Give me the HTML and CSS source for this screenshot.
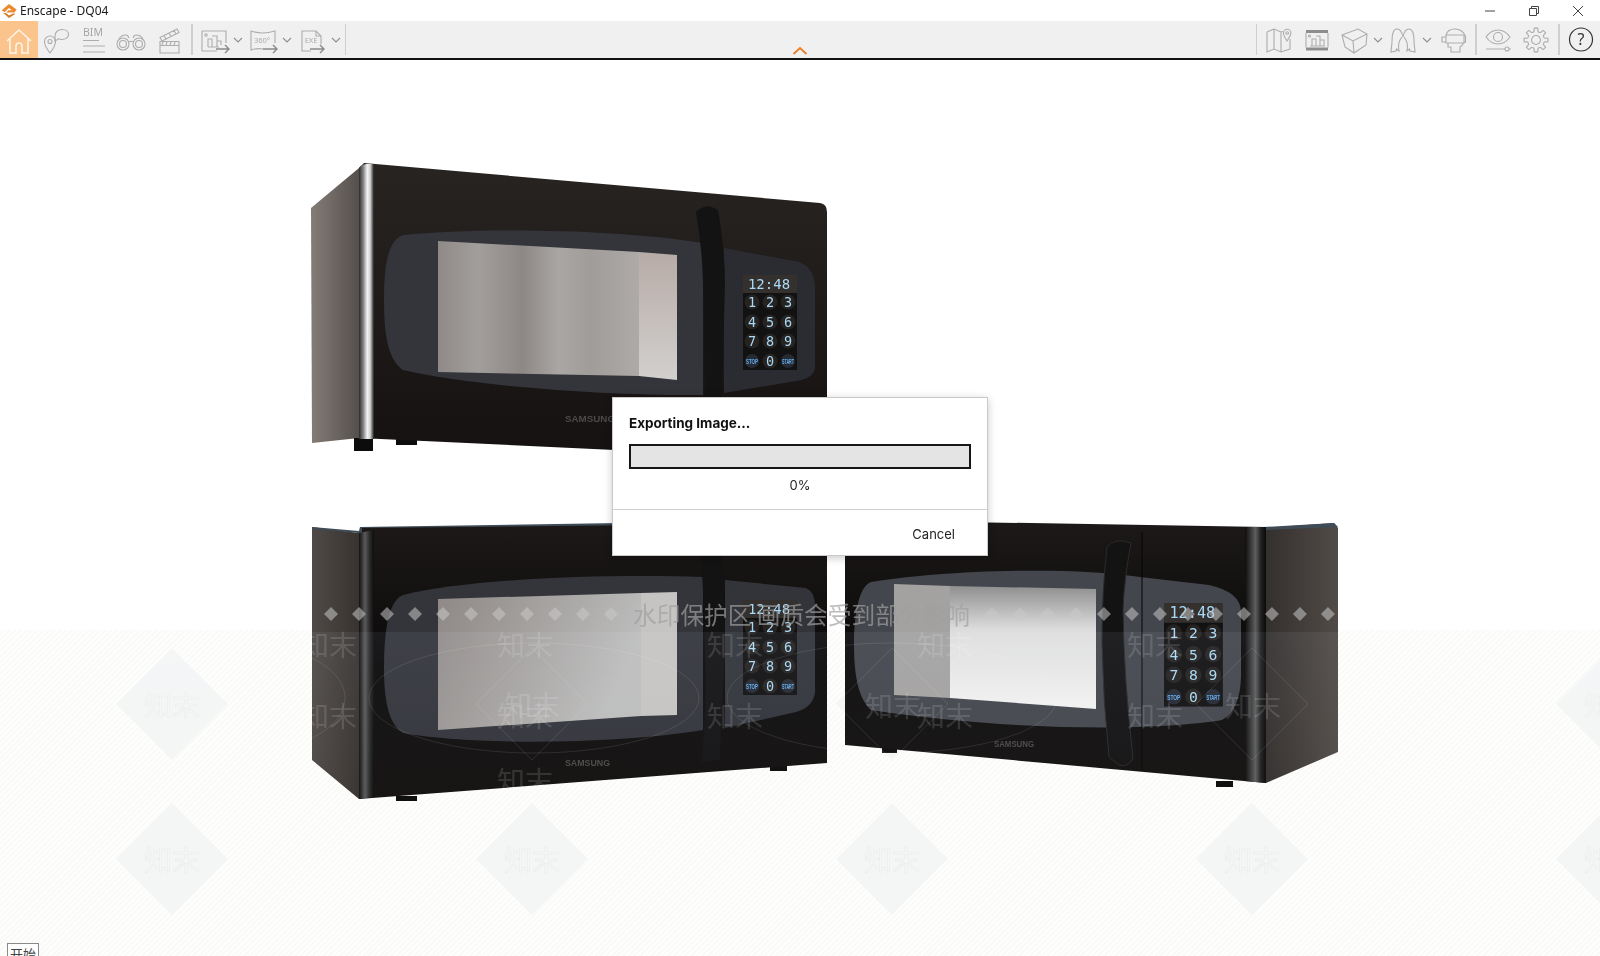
FILE: index.html
```html
<!DOCTYPE html>
<html lang="en">
<head>
  <meta charset="UTF-8">
  <title>Enscape - DQ04</title>
  <link rel="stylesheet" href="styles.css">
</head>
<body>
  <div class="app">
    <!-- title bar -->
    <div class="titlebar">
      <svg class="logo" width="16" height="16" viewBox="0 0 16 16">
        <path class="logo-top" d="M0.500 7.500 L8 1 L15.500 6.500 L13.500 9.500 H5.500 L7.500 7.200 H11 L8 5 L3.800 9 Z"/>
        <path class="logo-bottom" d="M2 9.800 L8 15 L14.500 10.800 L12 10.500 L8 12.600 L5.300 10.300 Z"/>
      </svg>
      <span class="title-text">Enscape - DQ04</span>
      <div class="win-btns">
        <div class="win-btn"><svg width="12" height="12" viewBox="0 0 12 12"><path d="M1 6 H11"/></svg></div>
        <div class="win-btn"><svg width="12" height="12" viewBox="0 0 12 12"><path d="M1.500 3.500 H8.500 V10.500 H1.500 Z M3.500 3.500 V1.500 H10.500 V8.500 H8.500"/></svg></div>
        <div class="win-btn"><svg width="12" height="12" viewBox="0 0 12 12"><path d="M1 1 L11 11 M11 1 L1 11"/></svg></div>
      </div>
    </div>

    <!-- toolbar -->
    <div class="toolbar">
      <div class="tool tool-home">
        <svg width="34" height="34" viewBox="0 0 34 34"><path d="M5 18 L17 7 L29 18 M8 16 V30 H14 V23 a3 3 0 0 1 6 0 V30 H26 V16"/></svg>
      </div>
      <div class="tool">
        <svg width="34" height="34" viewBox="0 0 34 34"><path d="M11 30 C7 25 5.500 22 5.500 18.500 a5.500 5.500 0 0 1 11 0 C16.500 22 15 25 11 30 Z"/><circle cx="11" cy="18.500" r="2"/><path d="M16 13 C16 9 19 6.500 23 6.500 C27 6.500 29.500 8.800 29.500 11.500 C29.500 14.500 26.500 16.500 23 16.500 C21.500 16.500 20.500 16.300 19.500 15.800 L16 18 Z"/></svg>
      </div>
      <div class="tool">
        <svg width="34" height="34" viewBox="0 0 34 34"><text class="ico-text" x="6" y="12.500">BIM</text><path d="M6 17.500 H22 M6 23 H28 M6 29 H28"/></svg>
      </div>
      <div class="tool">
        <svg width="34" height="34" viewBox="0 0 34 34"><circle cx="9" cy="21" r="6"/><circle cx="9" cy="21" r="3.500"/><circle cx="25" cy="21" r="6"/><circle cx="25" cy="21" r="3.500"/><path d="M15 19 Q17 17.500 19 19 M5 16 Q7 12 12 12 Q14 12 15 15 M29 16 Q27 12 22 12 Q20 12 19 15"/></svg>
      </div>
      <div class="tool">
        <svg width="34" height="34" viewBox="0 0 34 34"><path d="M8 18.500 H27 V30 H8 Z M8 22.500 H27 M11 19 L10 22 M15 19 L14 22 M19 19 L18 22 M23 19 L22 22 M8 14.500 L25 6 L27 9.500 L10 18 Z M12 12.500 L14 16 M17 10 L19 13.500 M22 7.500 L24 11"/></svg>
      </div>
      <div class="sep"></div>
      <div class="tool-drop">
        <svg width="32" height="34" viewBox="0 0 32 34"><path d="M19 28 H4 V8 H28 V20"/><circle cx="8" cy="12" r="1.200"/><path d="M10 24 V16 H14 V24 M14 13 H19 V24 M19 18 H23 V22 M10 24 H21"/><path class="arrow" d="M18 26 H31 M27 22 L31 26 L27 30"/></svg>
      </div>
      <div class="chev"><svg width="10" height="6" viewBox="0 0 10 6"><path d="M1 1 L5 5 L9 1"/></svg></div>
      <div class="tool-drop">
        <svg width="32" height="34" viewBox="0 0 32 34"><path d="M16 26 Q9 25 4 27 V8 Q15 12 28 8 V20"/><text class="ico-text-sm" x="15" y="20" text-anchor="middle">360°</text><path class="arrow" d="M16 26 H30 M26 22 L30 26 L26 30"/></svg>
      </div>
      <div class="chev"><svg width="10" height="6" viewBox="0 0 10 6"><path d="M1 1 L5 5 L9 1"/></svg></div>
      <div class="tool-drop">
        <svg width="32" height="34" viewBox="0 0 32 34"><path d="M15 28 H6 V8 H20 L25 13 V21 M20 8 V13 H25"/><text class="ico-text-sm" x="15" y="20" text-anchor="middle">EXE</text><path class="arrow" d="M14 26 H28 M24 22 L28 26 L24 30"/></svg>
      </div>
      <div class="chev"><svg width="10" height="6" viewBox="0 0 10 6"><path d="M1 1 L5 5 L9 1"/></svg></div>
      <div class="sep sep-end"></div>

      <div class="toolbar-right">
        <div class="sep sep-end"></div>
        <div class="tool">
          <svg width="34" height="34" viewBox="0 0 34 34"><path d="M5 9 L12 6 L19 9 L21 8.500 M5 9 V29 L12 26 L19 29 L28 26 V16 M12 6 V26 M19 9 V29"/><path d="M25 18 C22.500 14 21.500 12.500 21.500 10 a3.700 3.700 0 0 1 7.400 0 C28.900 12.500 27.500 14 25 18 Z"/><circle cx="25.200" cy="10" r="1.300"/></svg>
        </div>
        <div class="tool">
          <svg width="34" height="34" viewBox="0 0 34 34"><rect class="solid" x="6" y="7" width="22" height="3"/><rect class="solid" x="6" y="24.500" width="22" height="3"/><path d="M6 10 V24.500 M28 10 V24.500 M12 23 V16 H16 V23 M16 13 H20 V23 M20 17 H24 V23 M10 23 H25"/><circle cx="9.500" cy="13" r="1"/></svg>
        </div>
        <div class="tool-drop tool-cube">
          <svg width="32" height="34" viewBox="0 0 32 34"><path d="M4 12 L20 6 L29 11 L28 22 L16 30 L7 24 Z M4 12 L15 18 L29 11 M15 18 L16 30"/></svg>
        </div>
        <div class="chev"><svg width="10" height="6" viewBox="0 0 10 6"><path d="M1 1 L5 5 L9 1"/></svg></div>
        <div class="tool-drop">
          <svg width="32" height="34" viewBox="0 0 32 34"><path d="M16 14 C15 9 13 6 10 6 C6 6 5 12 5 18 C5 23 4 26 4 29 L9 28 L9.500 26 L12 28 C11 23 12 19 13 17 L15 14 M16 14 C17 9 19 6 22 6 C26 6 27 12 27 18 C27 23 28 26 28 29 L23 28 L22.500 26 L20 28 C21 23 20 19 19 17 L17 14"/></svg>
        </div>
        <div class="chev"><svg width="10" height="6" viewBox="0 0 10 6"><path d="M1 1 L5 5 L9 1"/></svg></div>
        <div class="tool tool-vr">
          <svg width="34" height="34" viewBox="0 0 34 34"><path d="M10 12 C11 8 15 6 19 6 C24 6 28 9 29 13 M10 12 H28 V20 H10 Z M10 14 H6 V19 H10 M28 12 L29.500 13 V19 L28 20 M12 20 V24 H15 V29 H24 V24 C26 23 27 22 27 20"/></svg>
        </div>
        <div class="sep sep-wide"></div>
        <div class="tool">
          <svg width="34" height="34" viewBox="0 0 34 34"><path d="M5 14 C9 8.500 13 7 17 7 C21 7 25 8.500 29 14 C25 19.500 21 21 17 21 C13 21 9 19.500 5 14 Z"/><circle cx="17" cy="14" r="4.500"/><path d="M5 26 H24 M28 26 H30"/><circle cx="26" cy="26" r="2"/></svg>
        </div>
        <div class="tool">
          <svg width="34" height="34" viewBox="0 0 34 34"><g transform="translate(17,17)"><polygon points="8.250,-2.060 11.880,-1.670 11.880,1.670 8.250,2.060 7.290,4.380 9.580,7.220 7.220,9.580 4.380,7.290 2.060,8.250 1.670,11.880 -1.670,11.880 -2.060,8.250 -4.380,7.290 -7.220,9.580 -9.580,7.220 -7.290,4.380 -8.250,2.060 -11.880,1.670 -11.880,-1.670 -8.250,-2.060 -7.290,-4.380 -9.580,-7.220 -7.220,-9.580 -4.380,-7.290 -2.060,-8.250 -1.670,-11.880 1.670,-11.880 2.060,-8.250 4.380,-7.290 7.220,-9.580 9.580,-7.220 7.290,-4.380"/><circle r="4.500"/></g></svg>
        </div>
        <div class="sep sep-last"></div>
        <div class="tool tool-help">
          <svg width="34" height="34" viewBox="0 0 34 34"><circle cx="17" cy="16.500" r="11.500"/><text class="help-mark" x="17" y="22" text-anchor="middle">?</text></svg>
        </div>
      </div>

      <svg class="collapse" width="16" height="9" viewBox="0 0 16 9"><path d="M1.500 8 L8 2 L14.500 8"/></svg>
    </div>

    <!-- render area -->
    <div class="viewport">
      <div class="band"></div>

      <svg class="scene" width="1600" height="896" viewBox="0 60 1600 896">
        <defs>
          <linearGradient id="front-a" x1="0" y1="0" x2="0" y2="1"><stop offset="0" stop-color="#282422"/><stop offset="1" stop-color="#151110"/></linearGradient>
          <linearGradient id="front-b" x1="0" y1="0" x2="0" y2="1"><stop offset="0" stop-color="#1c1918"/><stop offset="0.500" stop-color="#0c0a0a"/><stop offset="1" stop-color="#141110"/></linearGradient>
          <linearGradient id="side-a" x1="0" y1="0" x2="1" y2="0"><stop offset="0" stop-color="#847c76"/><stop offset="1" stop-color="#55504d"/></linearGradient>
          <linearGradient id="side-b" x1="0" y1="0" x2="1" y2="0"><stop offset="0" stop-color="#4f4a47"/><stop offset="1" stop-color="#38332f"/></linearGradient>
          <linearGradient id="side-c" x1="0" y1="0" x2="1" y2="0"><stop offset="0" stop-color="#332f2d"/><stop offset="1" stop-color="#514b47"/></linearGradient>
          <linearGradient id="strip-a" x1="0" y1="0" x2="1" y2="0"><stop offset="0" stop-color="#2a2a2a"/><stop offset="0.300" stop-color="#8a8a8a"/><stop offset="0.550" stop-color="#f4f4f4"/><stop offset="0.750" stop-color="#d0d0d0"/><stop offset="1" stop-color="#1c1a19"/></linearGradient>
          <linearGradient id="strip-b" x1="0" y1="0" x2="1" y2="0"><stop offset="0" stop-color="#111"/><stop offset="0.400" stop-color="#5a5a5a"/><stop offset="0.700" stop-color="#2c2c2c"/><stop offset="1" stop-color="#0e0d0d"/></linearGradient>
          <linearGradient id="strip-c" x1="0" y1="0" x2="1" y2="0"><stop offset="0" stop-color="#0e0d0d"/><stop offset="0.500" stop-color="#5e5e5e"/><stop offset="0.750" stop-color="#222"/><stop offset="1" stop-color="#0b0a0a"/></linearGradient>
          <linearGradient id="glass-a" x1="0" y1="0" x2="1" y2="0"><stop offset="0" stop-color="#8f8a87"/><stop offset="0.200" stop-color="#a29e9b"/><stop offset="0.420" stop-color="#8d8886"/><stop offset="0.600" stop-color="#a9a6a3"/><stop offset="0.760" stop-color="#a09c9a"/><stop offset="1" stop-color="#aeaaa8"/></linearGradient>
          <linearGradient id="glass-a2" x1="0" y1="0" x2="0" y2="1"><stop offset="0" stop-color="#b7aba6"/><stop offset="1" stop-color="#d2d0ce"/></linearGradient>
          <linearGradient id="glass-b" x1="0" y1="0" x2="1" y2="0.300"><stop offset="0" stop-color="#8e8886"/><stop offset="0.500" stop-color="#a5a2a0"/><stop offset="1" stop-color="#bdbdbd"/></linearGradient>
          <linearGradient id="glass-c" x1="0" y1="0" x2="0" y2="1"><stop offset="0" stop-color="#8f8f8f"/><stop offset="0.350" stop-color="#dcdcdc"/><stop offset="1" stop-color="#f1f1f1"/></linearGradient>
          <g id="keypad">
            <rect class="kp-display" width="54" height="18"/>
            <rect class="kp-body" y="18" width="54" height="77"/>
            <text class="kp-time" x="26" y="14" text-anchor="middle">12:48</text>
            <circle class="kp-key" cx="9" cy="27" r="7.500"/><circle class="kp-key" cx="27" cy="27" r="7.500"/><circle class="kp-key" cx="45" cy="27" r="7.500"/>
            <circle class="kp-key" cx="9" cy="47" r="7.500"/><circle class="kp-key" cx="27" cy="47" r="7.500"/><circle class="kp-key" cx="45" cy="47" r="7.500"/>
            <circle class="kp-key" cx="9" cy="66" r="7.500"/><circle class="kp-key" cx="27" cy="66" r="7.500"/><circle class="kp-key" cx="45" cy="66" r="7.500"/>
            <circle class="kp-stop" cx="9" cy="86" r="7"/><circle class="kp-key" cx="27" cy="86" r="7.500"/><circle class="kp-stop" cx="45" cy="86" r="7"/>
            <text class="kp-num" x="9" y="32" text-anchor="middle">1</text><text class="kp-num" x="27" y="32" text-anchor="middle">2</text><text class="kp-num" x="45" y="32" text-anchor="middle">3</text>
            <text class="kp-num" x="9" y="52" text-anchor="middle">4</text><text class="kp-num" x="27" y="52" text-anchor="middle">5</text><text class="kp-num" x="45" y="52" text-anchor="middle">6</text>
            <text class="kp-num" x="9" y="71" text-anchor="middle">7</text><text class="kp-num" x="27" y="71" text-anchor="middle">8</text><text class="kp-num" x="45" y="71" text-anchor="middle">9</text>
            <text class="kp-small" x="9" y="89" text-anchor="middle" textLength="12" lengthAdjust="spacingAndGlyphs">STOP</text>
            <text class="kp-num" x="27" y="91" text-anchor="middle">0</text>
            <text class="kp-small" x="45" y="89" text-anchor="middle" textLength="12" lengthAdjust="spacingAndGlyphs">START</text>
          </g>
        </defs>

        <!-- watermark diamonds, behind the product -->
        <g class="wm-diamonds">
          <polygon points="172,648 228,704 172,760 116,704"/>
          <polygon points="532,648 588,704 532,760 476,704"/>
          <polygon points="892,648 948,704 892,760 836,704"/>
          <polygon points="1252,648 1308,704 1252,760 1196,704"/>
          <polygon points="1612,648 1668,704 1612,760 1556,704"/>
          <polygon points="172,803 228,859 172,915 116,859"/>
          <polygon points="532,803 588,859 532,915 476,859"/>
          <polygon points="892,803 948,859 892,915 836,859"/>
          <polygon points="1252,803 1308,859 1252,915 1196,859"/>
          <polygon points="1612,803 1668,859 1612,915 1556,859"/>
        </g>
        <g class="wm-name">
          <text x="172" y="716" text-anchor="middle">知末</text>
          <text x="172" y="871" text-anchor="middle">知末</text>
          <text x="532" y="871" text-anchor="middle">知末</text>
          <text x="892" y="871" text-anchor="middle">知末</text>
          <text x="1252" y="871" text-anchor="middle">知末</text>
          <text x="1612" y="871" text-anchor="middle">知末</text>
          <text x="1612" y="716" text-anchor="middle">知末</text>
        </g>

        <!-- top microwave -->
        <polygon fill="url(#side-a)" points="311,208 359,168 359,438 312,443"/>
        <rect class="foot" x="354" y="438" width="19" height="13"/>
        <rect class="foot" x="396" y="438" width="21" height="7"/>
        <path fill="url(#front-a)" d="M364 163 L820 203 Q827 204 827 212 V460 L359 438 V168 Z"/>
        <path fill="url(#strip-a)" d="M359 168 Q362 163 374 164 V439 H359 Z"/>
        <path class="door" d="M384 300 C384 265 388 240 403 235 C470 228 610 228 703 243 V395 C610 396 470 386 403 370 C388 360 384 335 384 300 Z"/>
        <polygon fill="url(#glass-a)" points="438,241 639,252 639,376 438,372"/>
        <polygon fill="url(#glass-a2)" points="639,252 677,255 677,380 639,376"/>
        <path class="door-dark" d="M724 248 L799 262 Q815 268 815 288 V367 Q815 378 796 381 L724 393 Z"/>
        <path class="handle" d="M696 212 Q706 202 718 210 Q725 250 725 283 L722 397 H705 L703 283 Q702 245 696 212 Z"/>
        <use href="#keypad" x="743" y="275"/>
        <text class="brand" x="565" y="422" textLength="50" lengthAdjust="spacingAndGlyphs">SAMSUNG</text>

        <!-- bottom left microwave -->
        <polygon fill="url(#side-b)" points="312,527 359,533 359,799 312,760"/>
        <path class="edge" d="M312 527 L359 531 L360 527 L620 523 L625 526 L362 533 L359 533 L312 529 Z"/>
        <rect class="foot" x="396" y="796" width="21" height="5"/>
        <rect class="foot" x="770" y="765" width="17" height="6"/>
        <polygon fill="url(#front-b)" points="362,528 827,523 827,763 359,799"/>
        <polygon fill="url(#strip-b)" points="359,533 374,530 374,797 359,799"/>
        <path class="door" d="M384 668 C384 625 390 600 403 595 C470 578 610 574 703 577 V730 C610 745 470 745 403 733 C390 725 384 705 384 668 Z"/>
        <polygon fill="url(#glass-b)" points="438,599 641,593 641,716 438,730"/>
        <polygon class="glass-light" points="641,593 677,592 677,715 641,716"/>
        <path class="door-mid" d="M725 580 L806 588 Q815 592 815 606 V693 Q812 708 796 712 L725 728 Z"/>
        <path class="handle" d="M701 556 H722 Q725 600 725 653 L720 760 L701 763 Q707 710 705 653 Q704 600 701 556 Z"/>
        <use href="#keypad" x="743" y="600"/>
        <text class="brand" x="565" y="766" textLength="45" lengthAdjust="spacingAndGlyphs">SAMSUNG</text>

        <!-- bottom right microwave -->
        <polygon fill="url(#side-c)" points="1264,528 1334,523 1338,528 1338,752 1266,783"/>
        <path class="edge" d="M1264 527 L1334 523 L1338 527 L1266 530 Z"/>
        <rect class="foot" x="882" y="748" width="15" height="5"/>
        <rect class="foot" x="1216" y="781" width="17" height="6"/>
        <polygon fill="url(#front-b)" points="845,520 1266,527 1266,783 845,745"/>
        <polygon fill="url(#strip-c)" points="1245,527 1266,527 1266,783 1245,781"/>
        <path class="door-light" d="M854 645 C854 610 860 586 871 582 C930 572 1060 565 1140 577 L1209 585 Q1241 592 1241 612 V677 Q1240 710 1222 720 C1150 732 1000 730 871 710 C860 700 854 680 854 645 Z"/>
        <polygon class="glass-left" points="894,584 950,586 950,698 894,695"/>
        <polygon fill="url(#glass-c)" points="950,586 1096,589 1096,709 950,698"/>
        <line class="seam" x1="1142" y1="532" x2="1142" y2="770"/>
        <path class="handle handle-rim" d="M1107 547 Q1115 537 1131 543 Q1124 580 1123 610 Q1124 680 1133 758 Q1128 768 1119 765 L1109 757 Q1103 700 1102 643 Q1102 590 1107 547 Z"/>
        <use href="#keypad" transform="translate(1164 603) scale(1.09)"/>
        <text class="brand" x="994" y="747" textLength="40" lengthAdjust="spacingAndGlyphs">SAMSUNG</text>
      </svg>

      <!-- watermark over the product -->
      <div class="veil"></div>
      <svg class="scene" width="1600" height="896" viewBox="0 60 1600 896">
        <g class="wm-lines">
          <ellipse cx="534" cy="698" rx="165" ry="55"/>
          <ellipse cx="240" cy="698" rx="105" ry="55"/>
          <ellipse cx="892" cy="698" rx="165" ry="55"/>
          <polygon points="532,648 588,704 532,760 476,704"/>
          <polygon points="892,648 948,704 892,760 836,704"/>
          <polygon points="1252,648 1308,704 1252,760 1196,704"/>
        </g>
        <g class="wm-soft">
          <text x="329" y="656" text-anchor="middle">知末</text>
          <text x="525" y="656" text-anchor="middle">知末</text>
          <text x="735" y="656" text-anchor="middle">知末</text>
          <text x="945" y="656" text-anchor="middle">知末</text>
          <text x="1155" y="656" text-anchor="middle">知末</text>
          <text x="329" y="727" text-anchor="middle">知末</text>
          <text x="525" y="727" text-anchor="middle">知末</text>
          <text x="532" y="716" text-anchor="middle">知末</text>
          <text x="735" y="727" text-anchor="middle">知末</text>
          <text x="893" y="717" text-anchor="middle">知末</text>
          <text x="945" y="727" text-anchor="middle">知末</text>
          <text x="1155" y="727" text-anchor="middle">知末</text>
          <text x="1253" y="717" text-anchor="middle">知末</text>
          <text x="525" y="792" text-anchor="middle">知末</text>
        </g>
      </svg>

      <div class="notice">
        <div class="notice-dots"><i></i><i></i><i></i><i></i><i></i><i></i><i></i><i></i><i></i><i></i><i></i></div>
        <span class="notice-text">水印保护区 画质会受到部分影响</span>
        <div class="notice-dots"><i></i><i></i><i></i><i></i><i></i><i></i><i></i><i></i><i></i><i></i><i></i><i></i><i></i></div>
      </div>

      <!-- export dialog -->
      <div class="dialog">
        <div class="dialog-body">
          <div class="dialog-title">Exporting Image...</div>
          <div class="progress-bar"></div>
          <div class="progress-text">0%</div>
        </div>
        <div class="dialog-footer">
          <button class="btn-cancel">Cancel</button>
        </div>
      </div>

      <div class="start-tag">开始</div>
    </div>
  </div>
</body>
</html>
```

FILE: styles.css
```css
* {
  box-sizing: border-box;
}
html, body {
  margin: 0;
  padding: 0;
  height: 100%;
  overflow: hidden;
}
body {
  background-color: #fff;
  font-family: "Noto Sans", "Noto Sans CJK SC", sans-serif;
  color: #222;
}
.app {
  display: flex;
  flex-direction: column;
  height: 956px;
}

/* title bar */
.titlebar {
  display: flex;
  align-items: center;
  height: 21px;
  flex-shrink: 0;
  padding-left: 1px;
}
.logo {
  margin-right: 3px;
}
.logo-top {
  fill: #e98a2e;
}
.logo-bottom {
  fill: #d67a22;
}
.title-text {
  font-size: 12px;
  color: #1a1a1a;
}
.win-btns {
  display: flex;
  margin-left: auto;
}
.win-btn {
  display: flex;
  align-items: center;
  justify-content: center;
  width: 44px;
  height: 21px;
}
.win-btn path {
  fill: none;
  stroke: #444;
  stroke-width: 1;
}

/* toolbar */
.toolbar {
  position: relative;
  display: flex;
  align-items: center;
  height: 39px;
  flex-shrink: 0;
  background-color: #f0f0f0;
  border-bottom: 2px solid #111;
}
.tool,
.tool-drop,
.chev {
  display: flex;
  align-items: center;
  justify-content: center;
  height: 37px;
  flex-shrink: 0;
}
.tool {
  width: 37.5px;
}
.tool-drop {
  width: 32px;
}
.tool-cube {
  margin-left: 2px;
}
.tool-vr {
  width: 34px;
  margin-right: 3px;
}
.chev {
  width: 17px;
}
.tool svg path,
.tool svg circle,
.tool svg polygon,
.tool-drop svg path,
.tool-drop svg circle {
  fill: none;
  stroke: #adadad;
  stroke-width: 1.1;
}
.tool svg rect.solid {
  fill: #8d8d8d;
}
.tool-drop svg path.arrow {
  stroke: #8a8a8a;
  stroke-width: 1.4;
}
.chev path {
  fill: none;
  stroke: #8f8f8f;
  stroke-width: 1.1;
}
.tool-home {
  background-color: #fbc48c;
}
.tool-home svg path {
  stroke: #fff3e4;
  stroke-width: 1.6;
}
.ico-text {
  font-family: "Noto Sans", sans-serif;
  font-size: 10.5px;
  fill: #a6a6a6;
}
.ico-text-sm {
  font-family: "Noto Sans", sans-serif;
  font-size: 7.5px;
  fill: #adadad;
}
.sep {
  width: 2px;
  height: 31px;
  flex-shrink: 0;
  margin: 0 5px 0 3px;
  background-color: #cfcfcf;
}
.sep-end {
  width: 1px;
  margin: 0;
}
.toolbar-right {
  display: flex;
  align-items: center;
  margin-left: auto;
}
.toolbar-right > .sep-end {
  margin-right: 4px;
}
.toolbar-right > .sep-wide {
  margin-left: 2px;
  margin-right: 3px;
}
.toolbar-right > .sep-last {
  margin-left: 3px;
  margin-right: 3px;
}
.tool-help svg circle {
  stroke: #333;
  stroke-width: 1.2;
}
.help-mark {
  font-family: "Noto Sans", sans-serif;
  font-size: 16px;
  fill: #333;
}
.collapse {
  position: absolute;
  left: 792px;
  top: 25px;
}
.collapse path {
  fill: none;
  stroke: #e8832a;
  stroke-width: 2;
}

/* render area */
.viewport {
  position: relative;
  flex: 1;
  overflow: hidden;
  background-color: #fff;
}
.band {
  position: absolute;
  left: 0;
  right: 0;
  top: 570px;
  bottom: 0;
  background-color: #fcfcfb;
  background-image: repeating-linear-gradient(135deg, #fefefd 0, #fefefd 2px, #fafaf9 2px, #fafaf9 4px);
}
.scene {
  position: absolute;
  left: 0;
  top: 0;
}
.veil {
  position: absolute;
  left: 0;
  right: 0;
  top: 572px;
  height: 190px;
  background: linear-gradient(rgba(110, 120, 135, 0.12), rgba(110, 120, 135, 0.02));
  mix-blend-mode: screen;
}

/* microwave parts */
.foot {
  fill: #0d0c0c;
}
.door {
  fill: #34353b;
}
.door-dark {
  fill: #2b2c31;
}
.door-mid {
  fill: #32343a;
}
.door-light {
  fill: #44464d;
}
.handle {
  fill: #141314;
}
.handle-rim {
  stroke: #2a2a2a;
  stroke-width: 1;
}
.edge {
  fill: #3f4c57;
}
.seam {
  stroke: #050505;
  stroke-width: 1;
}
.glass-light {
  fill: #c6c4c2;
}
.glass-left {
  fill: #a3a2a1;
}
.brand {
  font-family: "Liberation Sans", sans-serif;
  font-size: 9px;
  font-weight: bold;
  fill: #4c4a48;
}
.kp-display {
  fill: #33302e;
}
.kp-body {
  fill: #131212;
}
.kp-key {
  fill: #262321;
}
.kp-stop {
  fill: #262a33;
}
.kp-time {
  font-family: "DejaVu Sans Mono", monospace;
  font-size: 14px;
  fill: #a9d8f5;
}
.kp-num {
  font-family: "DejaVu Sans Mono", monospace;
  font-size: 13.5px;
  fill: #a9d8f5;
}
.kp-small {
  font-family: "Liberation Sans", sans-serif;
  font-size: 7px;
  font-weight: bold;
  fill: #62aef0;
}

/* watermark */
.wm-diamonds polygon {
  fill: #f4f5f5;
}
.wm-name text {
  font-family: "Noto Sans CJK SC", sans-serif;
  font-size: 28px;
  fill: #f6f6f6;
  stroke: #e8e9e9;
  stroke-width: 0.5;
}
.wm-lines ellipse,
.wm-lines polygon {
  fill: none;
  stroke: rgba(255, 255, 255, 0.1);
  stroke-width: 1;
}
.wm-soft text {
  font-family: "Noto Sans CJK SC", sans-serif;
  font-size: 28px;
  fill: rgba(255, 255, 255, 0.13);
}
.notice {
  position: absolute;
  left: 324px;
  top: 538px;
  display: flex;
  align-items: center;
  height: 32px;
}
.notice-dots {
  display: flex;
  gap: 14px;
}
.notice-dots i {
  display: block;
  width: 14px;
  height: 14px;
  clip-path: polygon(50% 0, 100% 50%, 50% 100%, 0 50%);
  background-color: rgba(200, 200, 200, 0.55);
}
.notice-text {
  margin: 0 15px;
  font-family: "Noto Sans CJK SC", sans-serif;
  font-size: 23.700px;
  color: rgba(160, 160, 160, 0.7);
  white-space: nowrap;
}

/* export dialog */
.dialog {
  position: absolute;
  left: 612px;
  top: 337px;
  width: 376px;
  height: 159px;
  display: flex;
  flex-direction: column;
  background-color: #fff;
  border: 1px solid #c9c9c9;
  box-shadow: 0 2px 8px rgba(0, 0, 0, 0.22);
  font-family: Inter, sans-serif;
}
.dialog-body {
  height: 112px;
  padding: 16px 16px 0;
  border-bottom: 1px solid #cfcfcf;
}
.dialog-title {
  font-size: 13.500px;
  font-weight: 700;
  line-height: 18px;
  color: #111;
}
.progress-bar {
  height: 25px;
  margin-top: 12px;
  background-color: #e4e4e4;
  border: 2px solid #161616;
}
.progress-text {
  margin-top: 7px;
  font-size: 13px;
  line-height: 18px;
  text-align: center;
  color: #222;
}
.dialog-footer {
  flex: 1;
  display: flex;
  align-items: center;
  justify-content: flex-end;
  padding: 2px 32px 0 0;
}
.btn-cancel {
  border: none;
  background: none;
  padding: 0;
  font-family: Inter, sans-serif;
  font-size: 13px;
  color: #222;
}
.start-tag {
  position: absolute;
  left: 7px;
  top: 883px;
  width: 32px;
  height: 24px;
  border: 1px solid #8a8a8a;
  background-color: #fff;
  font-family: "Noto Sans CJK SC", sans-serif;
  font-size: 13px;
  line-height: 20px;
  text-align: center;
  color: #444;
}
```
